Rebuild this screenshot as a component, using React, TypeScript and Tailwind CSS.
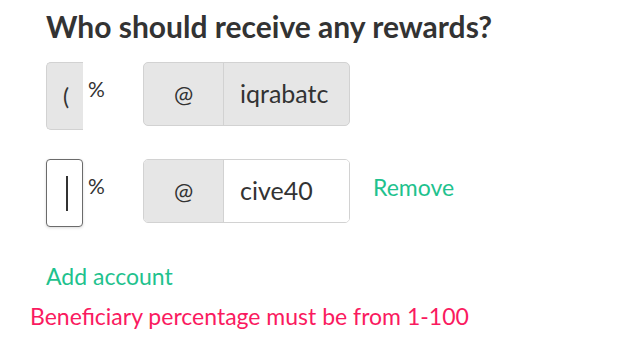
export default function App() {
	return (
		<div className="w-[640px] h-[350px] bg-white pt-[8px] font-['Lato','Open_Sans',sans-serif] text-[#333]">
			<h2 className="pl-[46px] text-[30px] font-bold leading-[36px] text-[#333]">
				Who should receive any rewards?
			</h2>

			{/* erste Zeile: deaktiviert */}
			<div className="mt-[18px] flex items-start pl-[46px]">
				<div className="flex h-[68px] w-[37px] items-center overflow-hidden rounded-l-[5px] border-[1.5px] border-r-0 border-[#d2d2d2] bg-[#e6e6e6] pl-[16px] text-[23px]">
					(
				</div>
				<div className="w-[60px] pl-[5px] pt-[14px] text-[21px] leading-[26px]">%</div>
				<div className="flex h-[64px] w-[207px] overflow-hidden rounded-[5px] border-[1.5px] border-[#d2d2d2] bg-[#e6e6e6]">
					<div className="flex w-[80px] items-center justify-center border-r-[1.5px] border-[#d2d2d2] text-[23px]">
						@
					</div>
					<div className="flex flex-1 items-center overflow-hidden whitespace-nowrap pl-[16px] text-[25px]">
						iqrabatc
					</div>
				</div>
			</div>

			{/* zweite Zeile: aktiv */}
			<div className="mt-[29px] flex items-start pl-[46px]">
				<div className="flex h-[68px] w-[37px] items-center rounded-[4px] border-[1.5px] border-[#6b6b6b] bg-white pl-[19px] shadow-[0_1px_3px_rgba(0,0,0,0.15)]">
					<span className="h-[35px] w-[2px] bg-[#333]" />
				</div>
				<div className="w-[60px] pl-[5px] pt-[14px] text-[21px] leading-[26px]">%</div>
				<div className="flex h-[64px] w-[207px] overflow-hidden rounded-[5px] border-[1.5px] border-[#d2d2d2]">
					<div className="flex w-[80px] items-center justify-center border-r-[1.5px] border-[#d2d2d2] bg-[#e6e6e6] text-[23px]">
						@
					</div>
					<div className="flex flex-1 items-center bg-white pl-[16px] text-[25px]">cive40</div>
				</div>
				<div className="ml-[23px] mt-[13px] text-[23px] leading-[30px] text-[#1fc28e]">Remove</div>
			</div>

			<div className="mt-[34px] pl-[46px] text-[23px] leading-[30px] text-[#1fc28e]">Add account</div>
			<div className="mt-[10px] pl-[30px] text-[23px] leading-[30px] text-[#fa1a60]">
				Beneficiary percentage must be from 1-100
			</div>
		</div>
	);
}
